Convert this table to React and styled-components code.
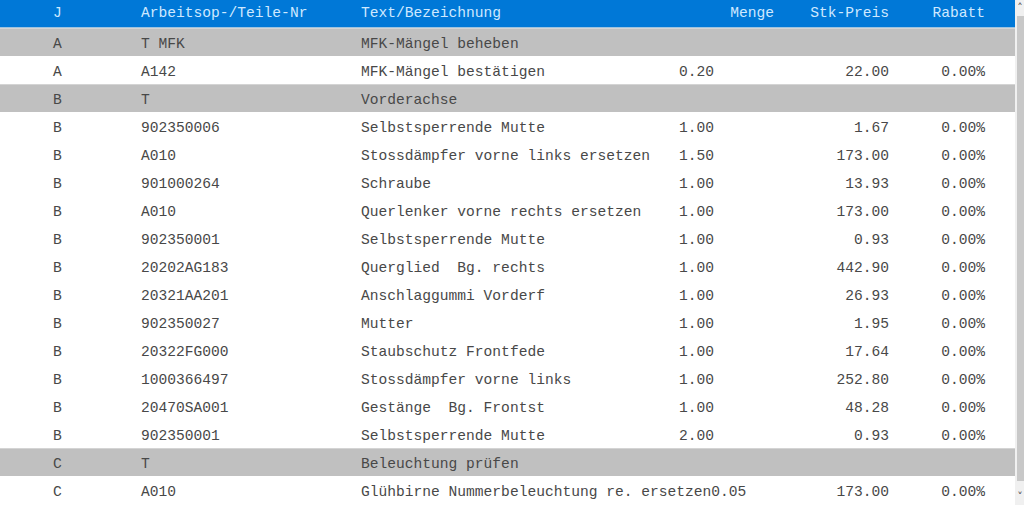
import React from 'react';
import styled, { createGlobalStyle } from 'styled-components';

const rows = [
  { j: 'A', nr: 'T MFK', text: 'MFK-Mängel beheben', group: true },
  { j: 'A', nr: 'A142', text: 'MFK-Mängel bestätigen', menge: '0.20', preis: '22.00', rabatt: '0.00%' },
  { j: 'B', nr: 'T', text: 'Vorderachse', group: true },
  { j: 'B', nr: '902350006', text: 'Selbstsperrende Mutte', menge: '1.00', preis: '1.67', rabatt: '0.00%' },
  { j: 'B', nr: 'A010', text: 'Stossdämpfer vorne links ersetzen', menge: '1.50', preis: '173.00', rabatt: '0.00%' },
  { j: 'B', nr: '901000264', text: 'Schraube', menge: '1.00', preis: '13.93', rabatt: '0.00%' },
  { j: 'B', nr: 'A010', text: 'Querlenker vorne rechts ersetzen', menge: '1.00', preis: '173.00', rabatt: '0.00%' },
  { j: 'B', nr: '902350001', text: 'Selbstsperrende Mutte', menge: '1.00', preis: '0.93', rabatt: '0.00%' },
  { j: 'B', nr: '20202AG183', text: 'Querglied  Bg. rechts', menge: '1.00', preis: '442.90', rabatt: '0.00%' },
  { j: 'B', nr: '20321AA201', text: 'Anschlaggummi Vorderf', menge: '1.00', preis: '26.93', rabatt: '0.00%' },
  { j: 'B', nr: '902350027', text: 'Mutter', menge: '1.00', preis: '1.95', rabatt: '0.00%' },
  { j: 'B', nr: '20322FG000', text: 'Staubschutz Frontfede', menge: '1.00', preis: '17.64', rabatt: '0.00%' },
  { j: 'B', nr: '1000366497', text: 'Stossdämpfer vorne links', menge: '1.00', preis: '252.80', rabatt: '0.00%' },
  { j: 'B', nr: '20470SA001', text: 'Gestänge  Bg. Frontst', menge: '1.00', preis: '48.28', rabatt: '0.00%' },
  { j: 'B', nr: '902350001', text: 'Selbstsperrende Mutte', menge: '2.00', preis: '0.93', rabatt: '0.00%' },
  { j: 'C', nr: 'T', text: 'Beleuchtung prüfen', group: true },
  { j: 'C', nr: 'A010', text: 'Glühbirne Nummerbeleuchtung re. ersetzen', menge: '0.05', preis: '173.00', rabatt: '0.00%' },
];

export default function App() {
  return (
    <>
      <GlobalStyle />
      <Frame>
        <Table>
          <HeaderRow>
            <Cell>J</Cell>
            <Cell>Arbeitsop-/Teile-Nr</Cell>
            <TextCell $header>
              <span>Text/Bezeichnung</span>
              <span>Menge</span>
            </TextCell>
            <NumCell>Stk-Preis</NumCell>
            <NumCell>Rabatt</NumCell>
          </HeaderRow>
          {rows.map((r, i) => (
            <Row key={i} $group={r.group}>
              <Cell>{r.j}</Cell>
              <Cell>{r.nr}</Cell>
              <TextCell>
                <Desc>{r.text}</Desc>
                <span>{r.menge}</span>
              </TextCell>
              <NumCell>{r.preis}</NumCell>
              <NumCell>{r.rabatt}</NumCell>
            </Row>
          ))}
        </Table>
        <Scrollbar>
          <Arrow>˄</Arrow>
          <Thumb />
          <Arrow>˅</Arrow>
        </Scrollbar>
      </Frame>
    </>
  );
}

/* =======================
   STYLES
======================= */

const GlobalStyle = createGlobalStyle`
  html, body {
    margin: 0;
    padding: 0;
    background: #ffffff;
  }
`;

const Frame = styled.div`
  display: flex;
  width: 1024px;
  height: 505px;
  overflow: hidden;
  font-family: "Liberation Mono", "Courier New", monospace;
  font-size: 14.6px;
  color: #484848;
`;

const Table = styled.div`
  width: 1015px;
  flex: none;
  display: flex;
  flex-direction: column;
`;

const RowBase = styled.div`
  display: grid;
  grid-template-columns: 88px 220px 413px 115px 96px;
  align-items: center;
  padding-left: 53px;
  height: 28px;
  box-sizing: border-box;
  white-space: pre;
`;

const HeaderRow = styled(RowBase)`
  background: #0078d7;
  color: #cfe9ff;
  border-bottom: 1px solid #9cc3e0;
  padding-bottom: 1px;
`;

const Row = styled(RowBase)`
  background: ${(p) => (p.$group ? '#c0c0c0' : '#ffffff')};
  border-top: 1px solid ${(p) => (p.$group ? '#d4d4d4' : '#ffffff')};
  padding-top: 3px;
`;

const Cell = styled.div`
  overflow: visible;
`;

const TextCell = styled.div`
  display: flex;
  justify-content: ${(p) => (p.$header ? 'space-between' : 'flex-start')};
`;

const Desc = styled.span`
  min-width: 318px;
`;

const NumCell = styled.div`
  text-align: right;
`;

const Scrollbar = styled.div`
  flex: 1;
  display: flex;
  flex-direction: column;
  align-items: stretch;
  background: #f0f0f0;
  padding-left: 1px;
`;

const Arrow = styled.div`
  height: 16px;
  font-family: "DejaVu Sans", sans-serif;
  font-size: 11px;
  line-height: 16px;
  color: #505050;
  text-align: center;
`;

const Thumb = styled.div`
  flex: 1;
  background: #c8c8c8;
  margin: 0 0 8px 1px;
`;
